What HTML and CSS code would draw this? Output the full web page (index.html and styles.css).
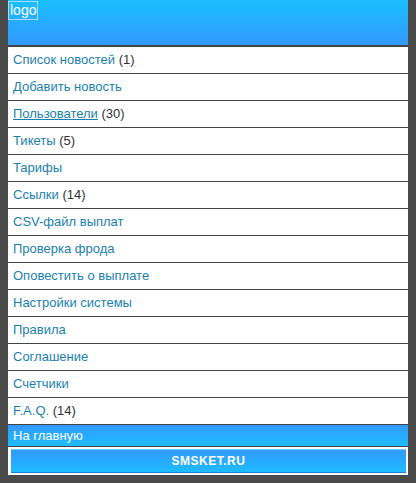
FILE: index.html
```html
<!DOCTYPE html>
<html lang="ru">
<head>
    <meta charset="UTF-8">
    <title>Админка</title>
    <link rel="stylesheet" href="styles.css">
</head>
<body>
    <div class="wrap">
        <div class="header">
            <span class="logo">logo</span>
        </div>
        <ul class="menu">
            <li><a href="#">Список новостей</a> (1)</li>
            <li><a href="#">Добавить новость</a></li>
            <li><a href="#" class="hover">Пользователи</a> (30)</li>
            <li><a href="#">Тикеты</a> (5)</li>
            <li><a href="#">Тарифы</a></li>
            <li><a href="#">Ссылки</a> (14)</li>
            <li><a href="#">CSV-файл выплат</a></li>
            <li><a href="#">Проверка фрода</a></li>
            <li><a href="#">Оповестить о выплате</a></li>
            <li><a href="#">Настройки системы</a></li>
            <li><a href="#">Правила</a></li>
            <li><a href="#">Соглашение</a></li>
            <li><a href="#">Счетчики</a></li>
            <li><a href="#">F.A.Q.</a> (14)</li>
        </ul>
        <div class="home"><a href="#">На главную</a></div>
        <div class="site">
            <span>SMSKET.RU</span>
        </div>
    </div>
</body>
</html>
```

FILE: styles.css
```css
* {
    margin: 0;
    padding: 0;
}
ul, li {
    list-style: none;
}
body {
    background-color: #4a4a4a;
    font-family: "Liberation Sans", Arial, sans-serif;
    font-size: 13px;
    color: #333;
}
a {
    color: #1b7fae;
    text-decoration: none;
}
.wrap {
    width: 400px;
    margin-left: 8px;
}
.header {
    height: 45px;
    background: linear-gradient(#1abfff, #3399ff);
    border-bottom: 2px solid #444;
}
.logo {
    display: inline-block;
    margin-top: 1px;
    padding: 0 1px;
    height: 17px;
    line-height: 17px;
    border: 1px solid #a8dcff;
    color: #fff;
    font-size: 14px;
}
.menu li {
    height: 26px;
    line-height: 26px;
    padding-left: 5px;
    background-color: #fff;
    border-bottom: 1px solid #444;
}
.menu a.hover {
    text-decoration: underline;
}
.home {
    height: 21px;
    line-height: 21px;
    padding-left: 5px;
    background: linear-gradient(#3399ff, #1ebcff);
    border-bottom: 1px solid #444;
}
.home a {
    color: #fff;
}
.site {
    height: 24px;
    padding: 2px 2px 2px 3px;
    background-color: #fff;
}
.site span {
    display: block;
    height: 22px;
    line-height: 22px;
    text-align: center;
    color: #fff;
    font-weight: bold;
    font-size: 12px;
    letter-spacing: 0.5px;
    background: linear-gradient(#3399ff, #1ebcff);
    border-top: 1px solid #6cd0ff;
    border-bottom: 1px solid #1a7fd8;
}
```
